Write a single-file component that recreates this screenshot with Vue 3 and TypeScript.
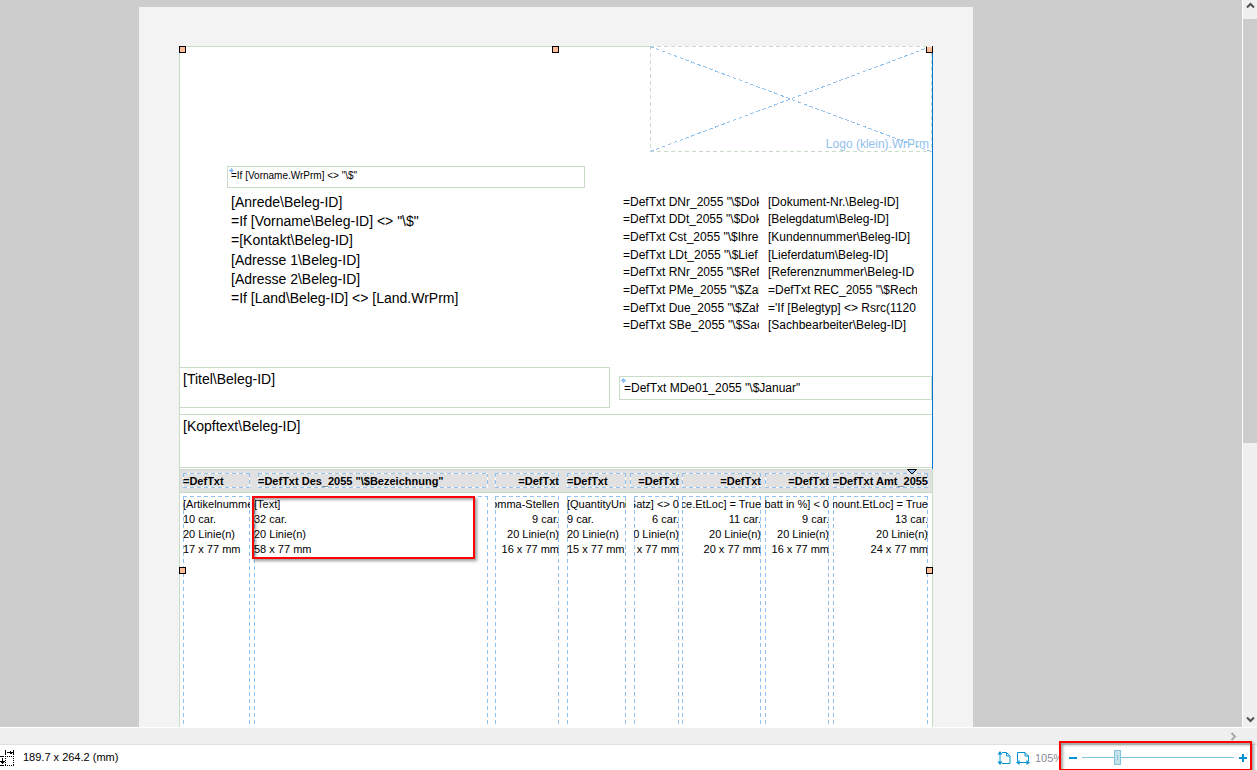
<script setup lang="ts">
import { ref } from 'vue'

interface Column {
  head: string
  lines: string[]
  width: number
  box: number
  align: 'start' | 'end'
  indent?: 'head' | 'body'
}

const zoom = ref(22)

const address: string[] = [
  '[Anrede\\Beleg-ID]',
  '=If [Vorname\\Beleg-ID] <> "\\$"',
  '=[Kontakt\\Beleg-ID]',
  '[Adresse 1\\Beleg-ID]',
  '[Adresse 2\\Beleg-ID]',
  '=If [Land\\Beleg-ID] <> [Land.WrPrm]',
]

const details: [string, string][] = [
  ['=DefTxt DNr_2055 "\\$Dok', '[Dokument-Nr.\\Beleg-ID]'],
  ['=DefTxt DDt_2055 "\\$Dok', '[Belegdatum\\Beleg-ID]'],
  ['=DefTxt Cst_2055 "\\$Ihre', '[Kundennummer\\Beleg-ID]'],
  ['=DefTxt LDt_2055 "\\$Lief', '[Lieferdatum\\Beleg-ID]'],
  ['=DefTxt RNr_2055 "\\$Ref', '[Referenznummer\\Beleg-ID'],
  ['=DefTxt PMe_2055 "\\$Zah', '=DefTxt REC_2055 "\\$Rech'],
  ['=DefTxt Due_2055 "\\$Zah', "='If [Belegtyp] <> Rsrc(1120"],
  ['=DefTxt SBe_2055 "\\$Sac', '[Sachbearbeiter\\Beleg-ID]'],
]

const columns: Column[] = [
  { head: '=DefTxt', lines: ['[Artikelnumme', '10 car.', '20 Linie(n)', '17 x 77 mm'], width: 74, box: 67, align: 'start' },
  { head: '=DefTxt Des_2055 "\\$Bezeichnung"', lines: ['[Text]', '32 car.', '20 Linie(n)', '58 x 77 mm'], width: 241, box: 234, align: 'start', indent: 'head' },
  { head: '=DefTxt', lines: ['omma-Stellen', '9 car.', '20 Linie(n)', '16 x 77 mm'], width: 72, box: 64, align: 'end' },
  { head: '=DefTxt', lines: ['[QuantityUnit', '9 car.', '20 Linie(n)', '15 x 77 mm'], width: 63, box: 59, align: 'start' },
  { head: '=DefTxt', lines: ['Satz] <> 0', '6 car.', '0 Linie(n)', 'x 77 mm'], width: 52, box: 49, align: 'end', indent: 'body' },
  { head: '=DefTxt', lines: ['rice.EtLoc] = True', '11 car.', '20 Linie(n)', '20 x 77 mm'], width: 83, box: 79, align: 'end' },
  { head: '=DefTxt', lines: ['abatt in %] < 0', '9 car.', '20 Linie(n)', '16 x 77 mm'], width: 68, box: 64, align: 'end' },
  { head: '=DefTxt Amt_2055', lines: ['mount.EtLoc] = True', '13 car.', '20 Linie(n)', '24 x 77 mm'], width: 99, box: 95, align: 'end' },
]

const boxWidth = (c: Column, part: 'head' | 'body') => `${c.box - (c.indent === part ? 4 : 0)}px`
</script>

<template>
  <div class="designer">
    <div class="workspace">
      <main class="canvas">
        <div class="page">
          <div class="frame">
            <section class="head">
              <div class="logo">
                <svg class="cross" viewBox="0 0 282 106" preserveAspectRatio="none" aria-hidden="true">
                  <path d="M0 .5 281 105.5M0 105.5 281 .5" fill="none" stroke="#91c1ee" stroke-dasharray="4 2.300" shape-rendering="crispEdges" />
                </svg>
                <span class="logo-text">Logo (klein).WrPrm</span>
              </div>
              <div class="field intro">
                <svg class="pin" viewBox="0 0 5 5" aria-hidden="true"><path d="M2 0h1v1h1v1h1v1H4v1H3v1H2V4H1V3H0V2h1V1h1z" /></svg>
                =If [Vorname.WrPrm] &lt;&gt; "\$"
              </div>
              <div class="info">
                <div class="address">
                  <div v-for="line in address" :key="line">{{ line }}</div>
                </div>
                <div class="details">
                  <template v-for="row in details" :key="row[1]">
                    <div class="clip">{{ row[0] }}</div>
                    <div class="clip">{{ row[1] }}</div>
                  </template>
                </div>
              </div>
              <div class="titles">
                <div class="field title">[Titel\Beleg-ID]</div>
                <div class="field month">
                  <svg class="pin" viewBox="0 0 5 5" aria-hidden="true"><path d="M2 0h1v1h1v1h1v1H4v1H3v1H2V4H1V3H0V2h1V1h1z" /></svg>
                  =DefTxt MDe01_2055 "\$Januar"
                </div>
              </div>
              <div class="intro-text">[Kopftext\Beleg-ID]</div>
            </section>

            <table class="lines">
              <colgroup>
                <col v-for="(c, i) in columns" :key="i" :style="{ width: c.width + 'px' }" />
              </colgroup>
              <thead>
                <tr>
                  <th v-for="(c, i) in columns" :key="i" scope="col">
                    <div class="dash cell" :class="[c.align, { indent: c.indent === 'head' }]" :style="{ width: boxWidth(c, 'head') }">
                      <span>{{ c.head }}</span>
                    </div>
                  </th>
                </tr>
              </thead>
              <tbody>
                <tr>
                  <td v-for="(c, i) in columns" :key="i">
                    <div class="dash cell tall" :class="[c.align, { indent: c.indent === 'body' }]" :style="{ width: boxWidth(c, 'body') }">
                      <span v-for="line in c.lines" :key="line">{{ line }}</span>
                    </div>
                  </td>
                </tr>
              </tbody>
            </table>

            <svg class="marker" viewBox="0 0 10 6" aria-hidden="true"><path d="M.5 .5h9L5 5z" fill="#91c1ee" stroke="#000" /></svg>
            <i class="handle top left"></i>
            <i class="handle top middle"></i>
            <i class="handle top right"></i>
            <i class="handle low left"></i>
            <i class="handle low right"></i>
            <i class="guide"></i>
            <i class="callout text-callout"></i>
          </div>
        </div>
      </main>
      <div class="vscroll">
        <button type="button" class="sb" aria-label="Nach oben">
          <svg width="9" height="7" viewBox="0 0 9 7"><path d="M1 5.5 4.5 2 8 5.5" fill="none" stroke="#505050" stroke-width="2" /></svg>
        </button>
        <div class="vthumb"></div>
        <button type="button" class="sb bottom" aria-label="Nach unten">
          <svg width="9" height="7" viewBox="0 0 9 7"><path d="M1 1.5 4.5 5 8 1.5" fill="none" stroke="#505050" stroke-width="2" /></svg>
        </button>
      </div>
    </div>

    <div class="hscroll">
      <button type="button" class="sb" aria-label="Nach rechts">
        <svg width="7" height="9" viewBox="0 0 7 9"><path d="M1.5 1 5 4.5 1.5 8" fill="none" stroke="#a8a8a8" stroke-width="2" /></svg>
      </button>
    </div>

    <footer class="status">
      <svg class="size-icon" width="15" height="16" viewBox="0 0 15 16" fill="none" stroke="#000" shape-rendering="crispEdges" aria-hidden="true">
        <path d="M5.500 0v5M13.500 0v5M7 2.500h6M10.500 1v3M11.500 1.500v2" />
        <path d="M0 6.500h4M2.500 8v6M0 11.500h5M1 12.500h3M0 15.500h4" />
        <path d="M5 6.500h10M5 15.500h10M5.500 6v10M13.500 6v10" stroke-dasharray="1 1" />
      </svg>
      <span class="size">189.7 x 264.2 (mm)</span>
      <div class="zoom">
        <button type="button" class="fit" aria-label="Ganze Seite">
          <svg width="14" height="14" viewBox="0 0 14 14" fill="none" stroke="#0093d0">
            <path d="M5 1.500h4.500l3.500 3.500v7.500H5M9.500 1.500V5H13" />
            <path d="M3 1v12" />
            <path d="M3 0 5.500 3.500H.5zM3 14 .5 10.500h5z" fill="#0093d0" stroke="none" />
          </svg>
        </button>
        <button type="button" class="fit" aria-label="Seitenbreite">
          <svg width="14" height="14" viewBox="0 0 14 14" fill="none" stroke="#0093d0">
            <path d="M1.500 10V1.500h7.500l3.500 3.500V10M9 1.500V5h3.500" />
            <path d="M1 11.500h12" />
            <path d="M0 11.500 3.500 9v5zM14 11.500 10.500 9v5z" fill="#0093d0" stroke="none" />
          </svg>
        </button>
        <output class="percent" for="zoom-range">105%</output>
        <div class="slider">
          <button type="button" aria-label="Verkleinern">
            <svg width="8" height="8" viewBox="0 0 8 8"><path d="M0 4h8" stroke="#0093d0" stroke-width="2" /></svg>
          </button>
          <input id="zoom-range" v-model.number="zoom" type="range" min="0" max="100" aria-label="Zoom" />
          <button type="button" aria-label="Vergrößern">
            <svg width="8" height="8" viewBox="0 0 8 8"><path d="M0 4h8M4 0v8" stroke="#0093d0" stroke-width="2" /></svg>
          </button>
          <i class="callout slider-callout"></i>
        </div>
      </div>
    </footer>
  </div>
</template>

<style>
body {
  margin: 0;
}
</style>

<style scoped>
.designer {
  --green: #c8dcc8;
  --blue: #91c1ee;
  display: flex;
  flex-direction: column;
  height: 100vh;
  overflow: hidden;
  background: #fff;
  color: #000;
  font: 12px/16px "Liberation Sans", Arial, sans-serif;
}
.designer * {
  box-sizing: border-box;
}
button {
  display: flex;
  align-items: center;
  justify-content: center;
  padding: 0;
  border: 0;
  background: none;
}
svg {
  display: block;
}
.workspace {
  display: flex;
  flex: 1;
  min-height: 0;
  gap: 1px;
}
.canvas {
  flex: 1;
  overflow: hidden;
  padding: 7px 0 0 139px;
  background: #cdcdcd;
}
.page {
  width: 834px;
  padding: 39px 40px;
  background: #f3f3f3;
}
.frame {
  position: relative;
  border: 1px solid var(--green);
  background: #fff;
}
.head {
  display: flex;
  flex-direction: column;
}
.logo {
  position: relative;
  display: flex;
  align-items: flex-end;
  justify-content: flex-end;
  width: 282px;
  height: 106px;
  margin: -1px 0 0 auto;
  padding-right: 3px;
  --dash: var(--green);
}
.logo,
.dash {
  background:
    repeating-linear-gradient(90deg, var(--dash) 0 4px, #fff 4px 7px) top / 100% 1px no-repeat,
    repeating-linear-gradient(90deg, var(--dash) 0 4px, #fff 4px 7px) bottom / 100% 1px no-repeat,
    repeating-linear-gradient(var(--dash) 0 4px, #fff 4px 7px) left / 1px 100% no-repeat,
    repeating-linear-gradient(var(--dash) 0 4px, #fff 4px 7px) right / 1px 100% no-repeat;
}
.cross {
  position: absolute;
  inset: 0;
  width: 100%;
  height: 100%;
}
.logo-text {
  position: relative;
  color: var(--blue);
}
.field {
  position: relative;
  border: 1px solid var(--green);
  white-space: nowrap;
}
.pin {
  position: absolute;
  top: 1px;
  left: 1px;
  width: 5px;
  height: 5px;
  fill: var(--blue);
}
.intro {
  width: 358px;
  height: 22px;
  margin: 14px 0 0 47px;
  padding: 1px 3px;
  font-size: 10px;
}
.info {
  display: flex;
  align-items: flex-start;
  justify-content: space-between;
  margin: 4px 15px 0 51px;
}
.address {
  display: grid;
  height: 116px;
  align-items: center;
  font-size: 14px;
  white-space: nowrap;
}
.details {
  display: grid;
  grid-template-columns: 136px 149px;
  column-gap: 9px;
  align-items: center;
  height: 141px;
  margin-top: 1px;
}
.clip {
  overflow: hidden;
  white-space: nowrap;
}
.titles {
  display: flex;
  align-items: flex-start;
  gap: 9px;
  margin-top: 33px;
}
.title {
  width: 430px;
  height: 41px;
  border-left: 0;
  padding: 3px;
  font-size: 14px;
}
.month {
  flex: 1;
  height: 24px;
  margin-top: 9px;
  padding: 3px 4px;
}
.intro-text {
  height: 54px;
  margin-top: 6px;
  padding: 3px;
  border: 1px solid var(--green);
  border-width: 1px 0;
  font-size: 14px;
}
.lines {
  width: 100%;
  margin-top: 1px;
  border-spacing: 0;
  border-right: 1px solid var(--green);
  table-layout: fixed;
  font-size: 11px;
  line-height: 15px;
}
th,
td {
  padding: 3px 0 0;
  vertical-align: top;
  text-align: left;
}
th {
  height: 24px;
  border: 1px solid var(--green);
  border-width: 1px 0;
  background: #e1e1e1;
}
th:first-child,
td:first-child {
  padding-left: 3px;
}
.dash {
  --dash: var(--blue);
}
.cell {
  display: flex;
  flex-direction: column;
  overflow: hidden;
  height: 15px;
  padding-top: 1px;
  white-space: nowrap;
}
.cell.tall {
  height: 400px;
}
.cell.start {
  align-items: flex-start;
}
.cell.end {
  align-items: flex-end;
}
.cell.indent {
  margin-left: 4px;
}
.guide {
  position: absolute;
  top: -1px;
  right: -1px;
  width: 1px;
  height: 423px;
  background: linear-gradient(#000 0 7px, #0078d4 7px);
}
.marker {
  position: absolute;
  top: 422px;
  right: 15px;
  width: 10px;
  height: 6px;
}
.handle {
  position: absolute;
  width: 7px;
  height: 7px;
  border: 1px solid #000;
  background: #ffbe96;
}
.handle.top {
  top: -1px;
}
.handle.low {
  top: 520px;
}
.handle.left {
  left: -1px;
}
.handle.middle {
  left: 372px;
}
.handle.right {
  right: -1px;
}
.handle.top.right {
  border-top-color: #fff;
}
.callout {
  position: absolute;
  border: 2px solid #f00;
  box-shadow: 2px 2px 3px rgba(0, 0, 0, 0.4), inset 2px 2px 3px rgba(0, 0, 0, 0.35);
  pointer-events: none;
}
.text-callout {
  top: 449px;
  left: 72px;
  width: 223px;
  height: 63px;
}
.vscroll {
  display: flex;
  flex-direction: column;
  width: 14px;
  background: #f0f0f0;
}
.sb {
  flex: none;
  height: 19px;
  padding-left: 1px;
}
.vscroll .sb {
  padding-bottom: 8px;
}
.vscroll .sb.bottom {
  margin-top: auto;
  padding: 3px 0 0 1px;
}
.vthumb {
  flex: none;
  height: 58.3%;
  background: #cdcdcd;
}
.hscroll {
  display: flex;
  align-items: center;
  justify-content: flex-end;
  height: 17px;
  margin-top: 1px;
  padding-right: 20px;
  border-bottom: 1px solid #e1e1e1;
  background: #efefef;
}
.status {
  display: flex;
  align-items: center;
  height: 25px;
}
.size-icon {
  flex: none;
}
.size {
  padding-bottom: 2px;
  margin-left: 8px;
  font-size: 11px;
  white-space: nowrap;
}
.zoom {
  display: flex;
  align-items: center;
  gap: 5px;
  margin-left: auto;
  padding-right: 5px;
}
.percent {
  width: 24px;
  margin-left: 0;
  overflow: hidden;
  color: #8a8a9a;
  font-size: 11px;
}
.slider {
  position: relative;
  display: flex;
  align-items: center;
  gap: 5px;
  height: 25px;
  padding: 0 5px;
}
.slider input {
  width: 152px;
  height: 15px;
  margin: 0;
  appearance: none;
  background: linear-gradient(#82c4dc, #82c4dc) center / 100% 1px no-repeat;
}
.slider input::-webkit-slider-thumb {
  appearance: none;
  width: 7px;
  height: 15px;
  border: 1px solid #82c4dc;
  background: linear-gradient(#82c4dc, #82c4dc) center / 1px 5px no-repeat #c4e1ec;
}
.slider-callout {
  top: -4px;
  right: 0;
  bottom: -1px;
  left: -5px;
}
</style>
